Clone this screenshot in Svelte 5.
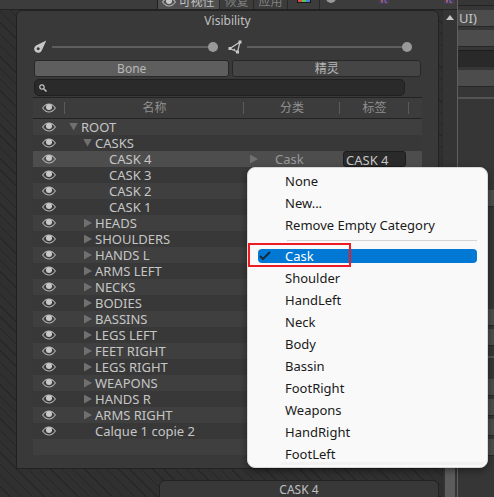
<script>
  const rows = [
    { name: 'ROOT', depth: 0, open: true },
    { name: 'CASKS', depth: 1, open: true },
    { name: 'CASK 4', depth: 2, leaf: true, category: 'Cask', label: 'CASK 4', selected: true },
    { name: 'CASK 3', depth: 2, leaf: true },
    { name: 'CASK 2', depth: 2, leaf: true },
    { name: 'CASK 1', depth: 2, leaf: true },
    { name: 'HEADS', depth: 1 },
    { name: 'SHOULDERS', depth: 1 },
    { name: 'HANDS L', depth: 1 },
    { name: 'ARMS LEFT', depth: 1 },
    { name: 'NECKS', depth: 1 },
    { name: 'BODIES', depth: 1 },
    { name: 'BASSINS', depth: 1 },
    { name: 'LEGS LEFT', depth: 1 },
    { name: 'FEET RIGHT', depth: 1 },
    { name: 'LEGS RIGHT', depth: 1 },
    { name: 'WEAPONS', depth: 1 },
    { name: 'HANDS R', depth: 1 },
    { name: 'ARMS RIGHT', depth: 1 },
    { name: 'Calque 1 copie 2', depth: 1, leaf: true }
  ];
  const actions = ['None', 'New...', 'Remove Empty Category'];
  const categories = ['Cask', 'Shoulder', 'HandLeft', 'Neck', 'Body', 'Bassin', 'FootRight', 'Weapons', 'HandRight', 'FootLeft'];
  let current = $state('Cask');
  let boneOpacity = $state(100);
  let meshOpacity = $state(100);
</script>

{#snippet eye()}
  <svg class="eye" width="14" height="10" viewBox="0 0 14 10" aria-hidden="true">
    <path d="M.6 5Q3.4 1 7 1t6.400 4Q10.600 9 7 9T.6 5Z" fill="none" stroke="#b4b4b4" stroke-width="1.100" />
    <circle cx="7" cy="4" r="3" fill="#c8c8c8" />
  </svg>
{/snippet}

{#snippet person()}
  <svg width="10" height="14" viewBox="0 0 10 14" aria-hidden="true">
    <rect width="10" height="14" fill="#4b3d52" />
    <path d="M2 10h2v2H2zM6 12h2v1H6z" fill="#a45d68" />
    <path d="M5 10h2v2H5zM2 12h2v1H2z" fill="#5a57a0" />
  </svg>
{/snippet}

<div class="app">
  <main class="stage">
    <nav class="toolbar">
      <button class="tool on">{@render eye()}可视性</button>
      <button class="tool">恢复</button>
      <button class="tool">应用</button>
      <button class="tool swatch" aria-label="Colour">
        <svg width="14" height="14" viewBox="0 0 14 14">
          <rect width="14" height="14" fill="#171717" />
          <path d="M1 1h4v12H1z" fill="#e04b4b" /><path d="M5 1h4v12H5z" fill="#53c653" /><path d="M9 1h4v12H9z" fill="#4a84d8" />
        </svg>
      </button>
      <div class="strip">
        <input class="range" type="range" value="0" aria-label="Alpha" />
        {@render person()}
        <span class="gap"></span>
        {@render person()}
      </div>
    </nav>

    <div class="view">
      <div class="canvas">
        <section class="panel">
          <h1>Visibility</h1>
          <div class="sliders">
            <label>
              <svg width="14" height="14" viewBox="0 0 14 14" role="img" aria-label="Bone">
                <path fill-rule="evenodd" fill="#c8c8c8" d="M13.300.5 9 10A4 4 0 1 1 3.500 5.200ZM5.200 7.300a1.500 1.500 0 1 0 .01 0Z" />
              </svg>
              <input class="range" type="range" bind:value={boneOpacity} />
            </label>
            <label>
              <svg width="14" height="14" viewBox="0 0 14 14" role="img" aria-label="Mesh">
                <path d="M12 2 2 8.500 9.500 12ZM5.500 10 7 9" fill="none" stroke="#c8c8c8" stroke-width="1.200" />
                <path d="M10.500.5h3v3h-3zM.5 7h3v3h-3zM8 10.500h3v3H8z" fill="#c8c8c8" />
              </svg>
              <input class="range" type="range" bind:value={meshOpacity} />
            </label>
          </div>
          <div class="tabs">
            <button class="tab on">Bone</button>
            <button class="tab">精灵</button>
          </div>
          <label class="search">
            <svg width="8" height="8" viewBox="0 0 8 8" aria-hidden="true">
              <circle cx="3" cy="3" r="2.200" fill="none" stroke="#c4c4c4" stroke-width="1.200" />
              <path d="m4.700 4.700 2.800 2.800" stroke="#c4c4c4" stroke-width="1.500" />
            </svg>
            <input type="search" aria-label="Search" />
          </label>
          <table>
            <colgroup><col class="c-eye" /><col /><col class="c-cat" /><col class="c-label" /><col class="c-end" /></colgroup>
            <thead>
              <tr><th>{@render eye()}</th><th>名称</th><th>分类</th><th>标签</th><th></th></tr>
            </thead>
            <tbody>
              {#each rows as row}
                <tr class:selected={row.selected}>
                  <td class="vis">{@render eye()}</td>
                  <td>
                    <div class="name d{row.depth}">
                      <span class="fold" class:open={row.open} class:leaf={row.leaf}></span>{row.name}
                    </div>
                  </td>
                  <td>
                    {#if row.category}
                      <div class="category"><span class="fold"></span>{row.category}</div>
                    {/if}
                  </td>
                  <td>
                    {#if row.label}<input class="label" value={row.label} aria-label="标签" />{/if}
                  </td>
                  <td></td>
                </tr>
              {/each}
              <tr><td colspan="5"></td></tr>
            </tbody>
          </table>
        </section>
        <section class="sprite"><h2>CASK 4</h2></section>
      </div>
      <div class="scrollbar">
        <span class="up"></span>
        <span class="thumb"></span>
      </div>
    </div>
  </main>

  <aside class="inspector">
    <div class="rule"></div>
    <div class="field">UI)</div>
    <div class="field"></div>
    <div class="field dark"></div>
    <div class="field"></div>
    <div class="line"></div>
    <div class="field far"></div>
    <div class="field farther"></div>
    <div class="field"></div>
    <div class="line"></div>
    <div class="field group"></div>
    <div class="field"></div>
    <div class="field"></div>
    <div class="field"></div>
  </aside>

  <div class="menu" role="menu">
    {#each actions as action}
      <button role="menuitem">{action}</button>
    {/each}
    <hr />
    {#each categories as category}
      <button role="menuitemradio" aria-checked={current === category} class:picked={current === category} onclick={() => (current = category)}>
        {#if current === category}
          <svg width="12" height="10" viewBox="0 0 12 10" aria-hidden="true"><path d="m1 5 3 3 7-7" fill="none" stroke="#16283a" stroke-width="1.800" /></svg>
        {/if}
        {category}
      </button>
    {/each}
    <div class="edge"></div>
    <div class="marker"></div>
  </div>
</div>

<style>
  :global(body) { background: #383838; }
  * { box-sizing: border-box; }
  .app {
    position: relative;
    display: flex;
    height: 100vh;
    overflow: hidden;
    background: #383838;
    color: #c6c6c6;
    font: 13px/16px "Noto Sans", "Noto Sans CJK SC", sans-serif;
  }
  button, input { font: inherit; color: inherit; margin: 0; border: 0; padding: 0; background: none; }
  .stage { flex: 1; min-width: 0; display: flex; flex-direction: column; }

  .toolbar {
    display: flex;
    align-items: flex-end;
    height: 10px;
    flex: none;
    padding-left: 157px;
    overflow: hidden;
    background: #3c3c3c;
    border-bottom: 1px solid #232323;
  }
  .tool {
    display: flex;
    align-items: center;
    justify-content: center;
    gap: 2px;
    width: 34px;
    height: 18px;
    flex: none;
    border-right: 1px solid #282828;
    font-size: 12px;
    line-height: 16px;
    white-space: nowrap;
    color: #808080;
  }
  .tool:not(.swatch) { height: 15px; margin-bottom: 0; }
  .tool.on { width: 63px; background: #505050; color: #c0c0c0; border-left: 1px solid #202020; }
  .swatch { width: 32px; padding-bottom: 8px; }
  .strip { flex: 1; display: flex; align-items: flex-end; gap: 5px; padding: 0 3px 5px 6px; }
  .strip .range { width: 48px; margin-bottom: 1px; flex: none; }
  .gap { flex: 1; }

  .view { flex: 1; min-height: 0; display: flex; }
  .canvas {
    flex: 1;
    min-width: 0;
    padding-left: 16px;
    padding-right: 3px;
    background: repeating-linear-gradient(45deg, #303030 0 7px, #272727 7px 8px);
  }
  .panel {
    padding: 1px 16px 13px;
    border: 1px solid #222;
    border-radius: 6px 6px 0 0;
    background: #393939;
  }
  h1, h2 { margin: 0; text-align: center; font-weight: 400; font-size: 12px; line-height: 18px; color: #c0c0c0; }
  .sliders { display: flex; gap: 10px; padding: 10px 10px 6px 0; }
  .sliders label { flex: 1; display: flex; align-items: center; gap: 5px; min-width: 0; height: 14px; }
  .sliders svg { flex: none; }
  .range { appearance: none; width: 100%; min-width: 0; height: 10px; }
  .range::-webkit-slider-runnable-track { height: 2px; background: #5e5e5e; }
  .range::-webkit-slider-thumb { appearance: none; width: 10px; height: 10px; margin-top: -4px; border-radius: 50%; background: #999; }

  .tabs { display: flex; gap: 3px; padding: 0 1px; }
  .tab {
    flex: 188;
    height: 17px;
    border: 1px solid #282828;
    border-radius: 3px;
    background: #454545;
    font-size: 12px;
    line-height: 14px;
    color: #b8b8b8;
  }
  .tab.on { flex: 195; background: #5e5e5e; }
  .search {
    display: flex;
    align-items: center;
    height: 17px;
    margin: 2px 17px 1px 1px;
    padding-left: 4px;
    gap: 4px;
    border: 1px solid #202020;
    border-radius: 5px;
    background: #2a2a2a;
  }
  .search input { flex: 1; min-width: 0; height: 14px; }

  table { width: 100%; table-layout: fixed; border-collapse: collapse; }
  .c-eye { width: 32px; }
  .c-cat { width: 96px; }
  .c-label { width: 69px; }
  .c-end { width: 13px; }
  th, td { padding: 0; height: 16px; }
  th {
    position: relative;
    height: 21px;
    border-top: 1px solid #232323;
    border-bottom: 1px solid #232323;
    background: #3c3c3c;
    font-size: 12px;
    line-height: 18px;
    font-weight: 400;
    color: #909090;
  }
  th:not(:last-child)::after { content: ""; position: absolute; right: 0; top: 4px; width: 1px; height: 12px; background: #5a5a5a; }
  tbody tr { background: #383838; }
  tbody tr:nth-child(odd) { background: #3f3f3f; }
  tbody tr.selected { background: #4d4d4d; }
  .eye { display: block; flex: none; }
  th .eye, .vis .eye { margin: 0 auto; }
  .name, .category { display: flex; align-items: center; height: 16px; white-space: nowrap; }
  .name { padding-left: 3px; }
  .name.d1 { padding-left: 17px; }
  .name.d2 { padding-left: 31px; }
  .fold { width: 13px; height: 9px; flex: none; }
  .fold::before {
    content: "";
    display: block;
    width: 8px;
    height: 9px;
    margin-left: 2px;
    background: #707070;
    clip-path: polygon(0 0, 100% 50%, 0 100%);
  }
  .fold.open::before { width: 9px; height: 8px; margin-left: 1px; clip-path: polygon(0 0, 100% 0, 50% 100%); }
  .fold.leaf::before { display: none; }
  .category { padding-left: 4px; gap: 14px; color: #999; }
  .label {
    display: block;
    width: 63px;
    height: 16px;
    margin-left: 3px;
    padding: 1px 2px 0;
    border: 1px solid #1d1d1d;
    border-radius: 3px;
    background: #2a2a2a;
  }
  .sprite {
    height: 40px;
    margin: 11px 0 0 143px;
    border: 1px solid #222;
    border-radius: 6px 6px 0 0;
    background: #383838;
  }
  .scrollbar { display: flex; flex-direction: column; align-items: center; width: 15px; flex: none; background: #343434; border-left: 1px solid #2c2c2c; }
  .up { width: 8px; height: 5px; margin-top: 5px; background: #c4c4c4; clip-path: polygon(50% 0, 100% 100%, 0 100%); }
  .thumb { width: 10px; height: 60px; margin-top: auto; background: #5c5c5c; }

  .inspector { width: 37px; flex: none; border-left: 1px solid #606060; background: #363636; }
  .rule { height: 6px; margin-bottom: 4px; border-bottom: 1px solid #222; }
  .field { height: 17px; margin-bottom: 3px; padding-left: 1px; background: #4c4c4c; border-bottom: 1px solid #282828; }
  .field.dark { background: #292929; border-top: 1px solid #1c1c1c; }
  .line { height: 2px; margin-top: 10px; background: #545454; }
  .far { margin-top: 91px; }
  .farther { margin-top: 102px; }
  .group { margin-top: 21px; }

  .menu {
    position: absolute;
    left: 247px;
    top: 167px;
    width: 241px;
    padding: 2px 10px;
    border: 1px solid #d8d8d8;
    border-radius: 8px;
    background: #f9f9f9;
    color: #1a1a1a;
    box-shadow: 0 3px 7px #0006;
  }
  .menu button {
    display: flex;
    align-items: center;
    position: relative;
    width: 100%;
    height: 22px;
    padding-left: 27px;
    text-align: left;
  }
  .menu .picked {
    height: 14px;
    margin-bottom: 4px;
    border-radius: 4px;
    background: #0078d4;
    color: #fff;
  }
  .menu .picked svg { position: absolute; left: 1px; top: 2px; }
  .menu hr { height: 1px; margin: 4px 0 8px 29px; border: 0; background: #d4d4d4; }
  .edge { height: 3px; margin: -3px -7px 0 23px; background: #f2f2f2; }
  .marker { position: absolute; left: 0; top: 75px; width: 103px; height: 24px; border: 2px solid #ed1c24; pointer-events: none; }
</style>
